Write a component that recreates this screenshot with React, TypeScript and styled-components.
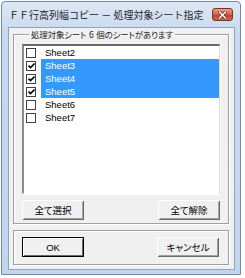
import React, { useState } from 'react'
import styled, { createGlobalStyle } from 'styled-components'

const GlobalStyle = createGlobalStyle`
  html, body {
    margin: 0;
    padding: 0;
    background: #ffffff;
  }
  body {
    font-family: "Noto Sans CJK JP", "Liberation Sans", sans-serif;
  }
`

const sheets = [
  { name: 'Sheet2', selected: false },
  { name: 'Sheet3', selected: true },
  { name: 'Sheet4', selected: true },
  { name: 'Sheet5', selected: true },
  { name: 'Sheet6', selected: false },
  { name: 'Sheet7', selected: false }
]

const App: React.FC = () => {
  const [items, setItems] = useState(sheets)

  const setAll = (value: boolean) =>
    setItems(items.map(item => ({ ...item, selected: value })))

  const toggle = (index: number) =>
    setItems(items.map((item, i) => (i === index ? { ...item, selected: !item.selected } : item)))

  return (
    <>
      <GlobalStyle />
      <StyledWindow>
        <StyledTitleBar>
          <StyledTitle>ＦＦ行高列幅コピー － 処理対象シート指定</StyledTitle>
          <StyledClose aria-label='閉じる'>
            <svg width='9' height='8' viewBox='0 0 9 8'>
              <path d='M1.5 1 L7.5 7 M7.5 1 L1.5 7' stroke='#5a1a10' strokeWidth='3' strokeLinecap='square' />
              <path d='M1.5 1 L7.5 7 M7.5 1 L1.5 7' stroke='#ffffff' strokeWidth='1.6' strokeLinecap='square' />
            </svg>
          </StyledClose>
        </StyledTitleBar>
        <StyledClient>
          <StyledGroup>
            <StyledLegend>処理対象シート 6 個のシートがあります</StyledLegend>
            <StyledList>
              {items.map((item, i) => (
                <StyledRow key={item.name} onClick={() => toggle(i)}>
                  <StyledCheck>
                    {item.selected && (
                      <svg width='7' height='7' viewBox='0 0 7 7'>
                        <path d='M0.5 3.5 L2.5 5.5 L6.5 1.5' stroke='#000' strokeWidth='1.6' fill='none' />
                      </svg>
                    )}
                  </StyledCheck>
                  <StyledItemText selected={item.selected}>{item.name}</StyledItemText>
                </StyledRow>
              ))}
            </StyledList>
            <StyledButtonRow>
              <StyledButton onClick={() => setAll(true)}>全て選択</StyledButton>
              <StyledButton onClick={() => setAll(false)}>全て解除</StyledButton>
            </StyledButtonRow>
          </StyledGroup>
          <StyledFooterGroup>
            <StyledButtonRow>
              <StyledButton isDefault>OK</StyledButton>
              <StyledButton>キャンセル</StyledButton>
            </StyledButtonRow>
          </StyledFooterGroup>
        </StyledClient>
      </StyledWindow>
    </>
  )
}

export default App

const StyledWindow = styled.div`
  margin: 1px 0 0 1px;
  width: 240px;
  height: 274px;
  box-sizing: border-box;
  border: 1px solid #6f8aa8;
  border-radius: 4px 4px 0 0;
  background: linear-gradient(#dde8f5, #c8d9ee 30px, #c3d5ec);
  padding: 0 5px 4px 6px;
  display: flex;
  flex-direction: column;
`

const StyledTitleBar = styled.div`
  height: 25px;
  display: flex;
  align-items: center;
  justify-content: space-between;
`

const StyledTitle = styled.div`
  font-size: 10px;
  color: #1e1e1e;
  padding-left: 1px;
  white-space: nowrap;
`

const StyledClose = styled.div`
  width: 21px;
  height: 13px;
  margin-right: 2px;
  box-sizing: border-box;
  border: 1px solid #7b3225;
  border-radius: 3px;
  background: linear-gradient(#e3a08f, #d2624a 50%, #c0391f 51%, #d76a4a);
  display: flex;
  align-items: center;
  justify-content: center;
`

const StyledClient = styled.div`
  flex: 1;
  background: #f0f0f0;
  border: 1px solid #8ea4c0;
  display: flex;
  flex-direction: column;
  padding: 0 5px 3px 4px;
`

const StyledGroup = styled.fieldset`
  margin: 0;
  padding: 2px 8px 3px 8px;
  border: 1px solid #a0a0a0;
  box-shadow: inset 1px 1px 0 #ffffff, 1px 1px 0 #ffffff;
  min-inline-size: 0;
`

const StyledLegend = styled.legend`
  font-size: 8.5px;
  letter-spacing: -0.2px;
  word-spacing: 1px;
  line-height: 13px;
  color: #1a1a1a;
  padding: 0 2px;
  margin-left: 7px;
  font-feature-settings: "palt";
  white-space: nowrap;
`

const StyledList = styled.div`
  height: 150px;
  box-sizing: border-box;
  background: #ffffff;
  border-top: 2px solid #696969;
  border-left: 2px solid #8a8a8a;
  border-right: 1px solid #d8d8d8;
  border-bottom: 1px solid #ffffff;
  box-shadow: 1px 1px 0 #ffffff;
  display: flex;
  flex-direction: column;
  margin-top: 1px;
`

const StyledRow = styled.div`
  height: 13px;
  display: flex;
  align-items: center;
  flex-shrink: 0;
`

const StyledCheck = styled.div`
  width: 10px;
  height: 10px;
  margin: 0 5px 0 2px;
  box-sizing: border-box;
  border: 1px solid #404040;
  background: #ffffff;
  display: flex;
  align-items: center;
  justify-content: center;
  flex-shrink: 0;
`

const StyledItemText = styled.div<{ selected: boolean }>`
  flex: 1;
  height: 13px;
  line-height: 13px;
  padding-left: 4px;
  font-family: "Liberation Sans", Arial, sans-serif;
  font-size: 9.5px;
  color: ${p => (p.selected ? '#ffffff' : '#000000')};
  background: ${p => (p.selected ? '#3399ff' : 'transparent')};
`

const StyledButtonRow = styled.div`
  display: flex;
  justify-content: space-between;
  margin-top: 6px;
`

const StyledButton = styled.button<{ isDefault?: boolean }>`
  width: 62px;
  height: 20px;
  padding: 0;
  box-sizing: border-box;
  background: #f0f0f0;
  font-family: "Liberation Sans", "Noto Sans CJK JP", sans-serif;
  font-size: 9.5px;
  font-feature-settings: "palt";
  color: #000000;
  border: ${p => (p.isDefault ? '1px solid #000000' : 'none')};
  box-shadow: ${p =>
    p.isDefault
      ? 'inset 1px 1px 0 #ffffff, inset -1px -1px 0 #696969'
      : 'inset 1px 1px 0 #ffffff, inset -1px -1px 0 #696969, inset 2px 2px 0 #f0f0f0, inset -2px -2px 0 #a0a0a0'};
`

const StyledFooterGroup = styled.div`
  margin-top: 6px;
  padding: 0 9px 7px 8px;
  border: 1px solid #a0a0a0;
  box-shadow: inset 1px 1px 0 #ffffff, 1px 1px 0 #ffffff;
`
